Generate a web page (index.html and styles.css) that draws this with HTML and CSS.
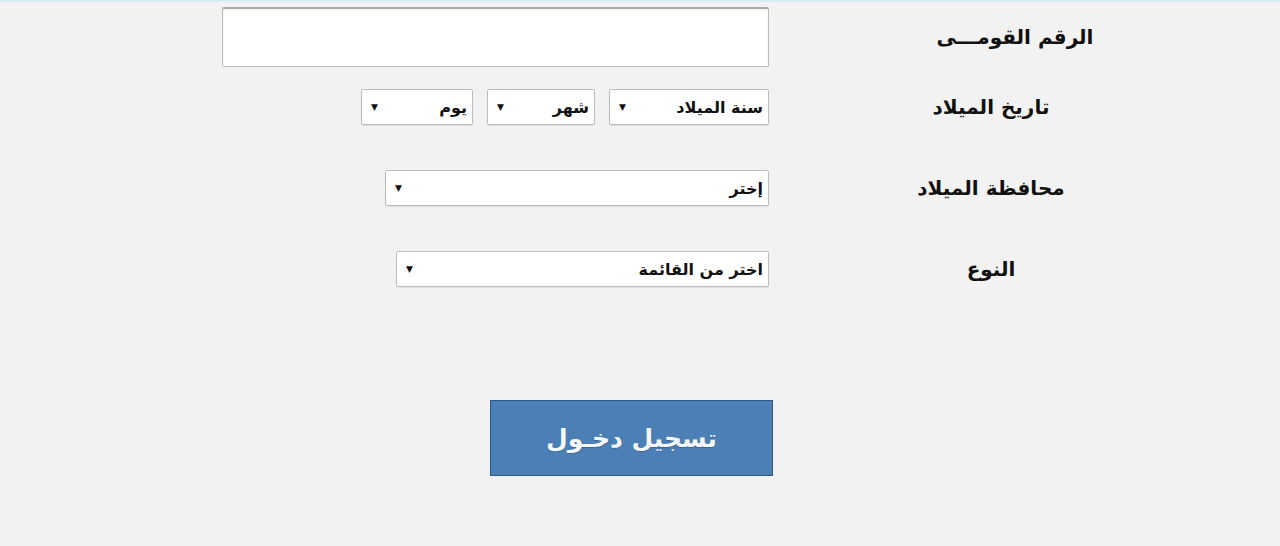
FILE: index.html
```html
<!DOCTYPE html>
<html lang="ar" dir="rtl">
<head>
  <meta charset="UTF-8" />
  <title>تسجيل دخول</title>
  <link rel="stylesheet" href="styles.css">
</head>
<body>

<!-- نموذج البيانات -->
<form class="login-form">
  <div class="row row-id">
    <label class="label label-id">الرقم القومـــى</label>
    <input class="text-input" type="text" />
  </div>

  <div class="row row-date">
    <label class="label">تاريخ الميلاد</label>
    <div class="date-group">
      <span class="select-wrap w-year"><select><option>سنة الميلاد</option></select></span>
      <span class="select-wrap w-month"><select><option>شهر</option></select></span>
      <span class="select-wrap w-day"><select><option>يوم</option></select></span>
    </div>
  </div>

  <div class="row row-gov">
    <label class="label">محافظة الميلاد</label>
    <span class="select-wrap w-gov"><select><option>إختر</option></select></span>
  </div>

  <div class="row row-type">
    <label class="label">النوع</label>
    <span class="select-wrap w-type"><select><option>اختر من القائمة</option></select></span>
  </div>

  <div class="actions">
    <button type="button" class="submit">تسجيل دخـول</button>
  </div>
</form>

</body>
</html>
```

FILE: styles.css
```css
body {
  margin: 0;
  background: #f2f2f2;
  border-top: 2px solid #d6eef3;
  font-family: 'DejaVu Sans', sans-serif;
  color: #111;
  height: 544px;
  overflow: hidden;
}

.login-form {
  padding-right: 67px;
}

.row {
  display: grid;
  grid-template-columns: 444px 1fr;
  align-items: center;
}

.row-id   { margin-top: 5px; }
.row-date { margin-top: 22px; }
.row-gov  { margin-top: 45px; }
.row-type { margin-top: 45px; }

.label {
  text-align: center;
  font-weight: bold;
  font-size: 20px;
}

.label-id {
  padding-left: 48px;
}

.text-input {
  box-sizing: border-box;
  width: 547px;
  height: 60px;
  border: 1px solid #b9b9b9;
  border-top: 2px solid #a9a9a9;
  border-radius: 2px;
  background: #fff;
  box-shadow: inset 0 1px 2px rgba(0, 0, 0, 0.08);
}

.date-group {
  display: flex;
  gap: 14px;
}

.select-wrap {
  position: relative;
  display: inline-block;
  height: 36px;
}

.select-wrap select {
  appearance: none;
  -webkit-appearance: none;
  box-sizing: border-box;
  width: 100%;
  height: 100%;
  border: 1px solid #bdbdbd;
  border-radius: 2px;
  background: #fff;
  box-shadow: 0 1px 1px rgba(0, 0, 0, 0.08);
  font-family: 'DejaVu Sans', sans-serif;
  font-weight: bold;
  font-size: 16px;
  color: #111;
  padding: 0 5px 0 24px;
}

.select-wrap::after {
  content: "▼";
  position: absolute;
  left: 10px;
  top: 50%;
  transform: translateY(-50%);
  font-size: 9px;
  color: #111;
  pointer-events: none;
}

.w-year  { width: 160px; }
.w-month { width: 108px; }
.w-day   { width: 112px; }
.w-gov   { width: 384px; }
.w-type  { width: 373px; }

.actions {
  margin-top: 113px;
  padding-right: 440px;
}

.submit {
  width: 283px;
  height: 76px;
  background: #4b7fb6;
  border: 1px solid #2d5a8a;
  color: #f4f8fc;
  font-family: 'DejaVu Sans', sans-serif;
  font-weight: bold;
  font-size: 25px;
  text-shadow: 0 1px 1px rgba(0, 0, 0, 0.2);
  cursor: pointer;
}
```
